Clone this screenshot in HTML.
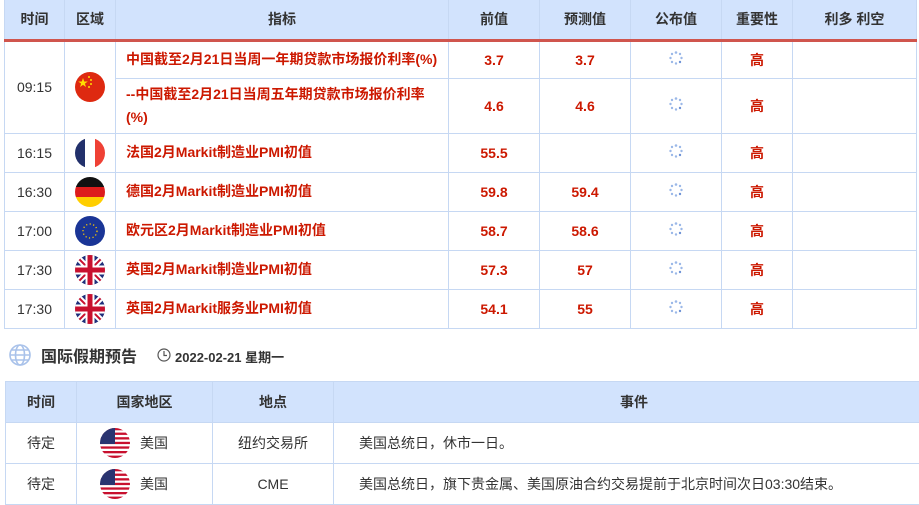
<!DOCTYPE html>
<html><head><meta charset="utf-8"><style>
*{margin:0;padding:0;box-sizing:border-box}
body{width:919px;height:503px;overflow:hidden;background:#fff;font-family:"Liberation Sans","Noto Sans CJK SC",sans-serif;font-size:14px;color:#333;position:relative}
table{border-collapse:collapse;table-layout:fixed;position:absolute}
td,th{border:1px solid #c6d8f3;text-align:center;vertical-align:middle;padding:0}
th{background:#d2e3fd;font-weight:bold;color:#333;font-size:14px}
#t1{left:4px;top:0;width:912px}
#t1 tr.h th{height:40px;border-bottom:3px solid #d0554d;border-top:none}
.r{color:#cc1800;font-weight:bold}
.ind{text-align:left;padding-left:10px;padding-right:16px;color:#cc1800;font-weight:bold;line-height:23px}
.f{display:block;margin:auto;width:30px;height:30px}
.sp{display:block;margin:auto;width:14px;height:14px;position:relative;top:-2px}
#t2{left:5px;top:381px;width:930px}
#t2 th{height:41px}
#t2 td{height:41px}
.cn{display:flex;align-items:center;padding-left:23px}
.cn span{margin-left:10px}
</style></head><body>
<svg width="0" height="0" style="position:absolute"><defs>
<clipPath id="c"><circle cx="15" cy="15" r="15"/></clipPath>
<g id="uk"><g clip-path="url(#c)"><rect width="30" height="30" fill="#1f2f7a"/><path d="M0 0L30 30M30 0L0 30" stroke="#fff" stroke-width="6"/><path d="M0 0L30 30M30 0L0 30" stroke="#c8102e" stroke-width="2"/><path d="M15 0V30M0 15H30" stroke="#fff" stroke-width="9"/><path d="M15 0V30M0 15H30" stroke="#c8102e" stroke-width="5"/></g></g>
<g id="sp"><g fill="#9bb8e8"><circle cx="7" cy="1.5" r="1.3"/><circle cx="11" cy="3" r="1.2"/><circle cx="12.5" cy="7" r="1.2"/><circle cx="11" cy="11" r="1.2" fill="#6f93d6"/><circle cx="7" cy="12.5" r="1.2"/><circle cx="3" cy="11" r="1.2"/><circle cx="1.5" cy="7" r="1.2"/><circle cx="3" cy="3" r="1.2"/></g></g>
<g id="us"><g clip-path="url(#c)"><rect width="30" height="30" fill="#fff"/><g fill="#c8102e"><rect y="0" width="30" height="2.3"/><rect y="4.6" width="30" height="2.3"/><rect y="9.2" width="30" height="2.3"/><rect y="13.8" width="30" height="2.3"/><rect y="18.4" width="30" height="2.3"/><rect y="23" width="30" height="2.3"/><rect y="27.6" width="30" height="2.4"/></g><rect width="15" height="16" fill="#2a3470"/></g></g>
</defs></svg>
<table id="t1">
<colgroup><col style="width:60px"><col style="width:51px"><col style="width:333px"><col style="width:91px"><col style="width:91px"><col style="width:91px"><col style="width:71px"><col style="width:124px"></colgroup>
<tr class="h"><th>时间</th><th>区域</th><th>指标</th><th>前值</th><th>预测值</th><th>公布值</th><th>重要性</th><th>利多 利空</th></tr>
<tr style="height:38px"><td rowspan="2">09:15</td><td rowspan="2"><svg class="f" viewBox="0 0 30 30"><circle cx="15" cy="15" r="15" fill="#de2910"/><polygon points="8,6 9.2,9.5 12.8,9.5 9.9,11.6 11,15 8,12.9 5,15 6.1,11.6 3.2,9.5 6.8,9.5" fill="#ffde00"/><circle cx="14" cy="5" r="1" fill="#ffde00"/><circle cx="16" cy="8" r="1" fill="#ffde00"/><circle cx="16" cy="12" r="1" fill="#ffde00"/><circle cx="14" cy="15" r="1" fill="#ffde00"/></svg></td><td class="ind" style="padding-right:0">中国截至2月21日当周一年期贷款市场报价利率(%)</td><td class="r">3.7</td><td class="r">3.7</td><td><svg class="sp" viewBox="0 0 14 14"><use href="#sp"/></svg></td><td class="r">高</td><td></td></tr>
<tr style="height:55px"><td class="ind">--中国截至2月21日当周五年期贷款市场报价利率(%)</td><td class="r">4.6</td><td class="r">4.6</td><td><svg class="sp" viewBox="0 0 14 14"><use href="#sp"/></svg></td><td class="r">高</td><td></td></tr>
<tr style="height:39px"><td>16:15</td><td><svg class="f" viewBox="0 0 30 30"><g clip-path="url(#c)"><rect width="10" height="30" fill="#22306b"/><rect x="10" width="10" height="30" fill="#fff"/><rect x="20" width="10" height="30" fill="#ef4135"/></g></svg></td><td class="ind">法国2月Markit制造业PMI初值</td><td class="r">55.5</td><td></td><td><svg class="sp" viewBox="0 0 14 14"><use href="#sp"/></svg></td><td class="r">高</td><td></td></tr>
<tr style="height:39px"><td>16:30</td><td><svg class="f" viewBox="0 0 30 30"><g clip-path="url(#c)"><rect width="30" height="10" fill="#111"/><rect y="10" width="30" height="10" fill="#dd1c1c"/><rect y="20" width="30" height="10" fill="#ffce00"/></g></svg></td><td class="ind">德国2月Markit制造业PMI初值</td><td class="r">59.8</td><td class="r">59.4</td><td><svg class="sp" viewBox="0 0 14 14"><use href="#sp"/></svg></td><td class="r">高</td><td></td></tr>
<tr style="height:39px"><td>17:00</td><td><svg class="f" viewBox="0 0 30 30"><circle cx="15" cy="15" r="15" fill="#1a3596"/><circle cx="15" cy="15" r="7" fill="none" stroke="#ffcc00" stroke-width="1.3" stroke-dasharray="1.2 2.4"/></svg></td><td class="ind">欧元区2月Markit制造业PMI初值</td><td class="r">58.7</td><td class="r">58.6</td><td><svg class="sp" viewBox="0 0 14 14"><use href="#sp"/></svg></td><td class="r">高</td><td></td></tr>
<tr style="height:39px"><td>17:30</td><td><svg class="f" viewBox="0 0 30 30"><use href="#uk"/></svg></td><td class="ind">英国2月Markit制造业PMI初值</td><td class="r">57.3</td><td class="r">57</td><td><svg class="sp" viewBox="0 0 14 14"><use href="#sp"/></svg></td><td class="r">高</td><td></td></tr>
<tr style="height:39px"><td>17:30</td><td><svg class="f" viewBox="0 0 30 30"><use href="#uk"/></svg></td><td class="ind">英国2月Markit服务业PMI初值</td><td class="r">54.1</td><td class="r">55</td><td><svg class="sp" viewBox="0 0 14 14"><use href="#sp"/></svg></td><td class="r">高</td><td></td></tr>
</table>

<svg style="position:absolute;left:9px;top:344px" width="22" height="22" viewBox="0 0 22 22" fill="none" stroke="#a9c2ea" stroke-width="1.6"><circle cx="11" cy="11" r="10"/><ellipse cx="11" cy="11" rx="4.5" ry="10"/><path d="M1 11H21M3 6H19M3 16H19"/></svg>
<div style="position:absolute;left:41px;top:343px;font-size:16px;font-weight:bold;color:#333">国际假期预告</div>
<svg style="position:absolute;left:157px;top:348px" width="14" height="14" viewBox="0 0 14 14" fill="none" stroke="#555" stroke-width="1.2"><circle cx="7" cy="7" r="6"/><path d="M7 3V7.5H10"/></svg>
<div style="position:absolute;left:175px;top:347px;font-size:13px;font-weight:bold;color:#333">2022-02-21 星期一</div>

<table id="t2">
<colgroup><col style="width:71px"><col style="width:136px"><col style="width:121px"><col></colgroup>
<tr><th>时间</th><th>国家地区</th><th>地点</th><th>事件</th></tr>
<tr><td>待定</td><td><div class="cn"><svg width="30" height="30" viewBox="0 0 30 30"><use href="#us"/></svg><span>美国</span></div></td><td>纽约交易所</td><td style="text-align:left;padding-left:25px">美国总统日，休市一日。</td></tr>
<tr><td>待定</td><td><div class="cn"><svg width="30" height="30" viewBox="0 0 30 30"><use href="#us"/></svg><span>美国</span></div></td><td>CME</td><td style="text-align:left;padding-left:25px">美国总统日，旗下贵金属、美国原油合约交易提前于北京时间次日03:30结束。</td></tr>
</table>
</body></html>
